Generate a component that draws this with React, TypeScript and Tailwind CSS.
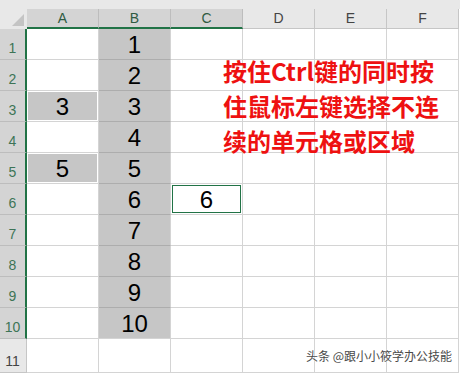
import React from "react";

const cols = ["A", "B", "C", "D", "E", "F"];
const selectedCols = ["A", "B", "C"];
const rows = [1, 2, 3, 4, 5, 6, 7, 8, 9, 10, 11];

function CellValue({ children }: { children: React.ReactNode }) {
  return (
    <span className="text-[24px] leading-[24px] text-black pt-[2px]">
      {children}
    </span>
  );
}

function Cell({ row, col }: { row: number; col: string }) {
  const base =
    "w-[72px] h-full shrink-0 border-r border-b border-[#d4d4d4] flex items-center justify-center";

  if (col === "B" && row <= 10) {
    return (
      <div
        className={`${base} bg-[#c6c6c6] border-b-[#adadad] ${
          row === 10 ? "border-b-[#d4d4d4]" : ""
        }`}
      >
        <CellValue>{row}</CellValue>
      </div>
    );
  }

  if (col === "A" && (row === 3 || row === 5)) {
    return (
      <div className={`${base} p-[1px]`}>
        <div className="w-full h-full bg-[#c6c6c6] flex items-center justify-center">
          <CellValue>{row}</CellValue>
        </div>
      </div>
    );
  }

  if (col === "C" && row === 6) {
    return (
      <div className={`${base} px-[1px] pt-[1px] pb-[1px]`}>
        <div className="w-full h-full border border-[#217346] flex items-center justify-center">
          <CellValue>6</CellValue>
        </div>
      </div>
    );
  }

  return <div className={base} />;
}

export default function App() {
  return (
    <div className="relative w-[460px] h-[373px] bg-white overflow-hidden font-['Liberation_Sans','Noto_Sans_CJK_SC',sans-serif]">
      {/* top strip */}
      <div className="h-[9px] bg-[#e8e8e8]" />

      {/* column headers */}
      <div className="flex h-[20px]">
        <div className="w-[27px] shrink-0 bg-[#e8e8e8] border-b-2 border-[#e8e8e8] relative">
          <svg
            className="absolute right-[3px] bottom-[1px]"
            width="12"
            height="12"
            viewBox="0 0 12 12"
          >
            <polygon points="12,0 12,12 0,12" fill="#c4c4c4" />
          </svg>
        </div>
        {cols.map((c) => {
          const sel = selectedCols.includes(c);
          return (
            <div
              key={c}
              className={`w-[72px] shrink-0 flex items-center justify-center text-[14px] border-r ${
                sel
                  ? "bg-[#d4d4d4] border-b-2 border-b-[#217346] border-r-[#bdbdbd] text-[#2f5a42]"
                  : "bg-[#e8e8e8] border-b border-b-[#c6c6c6] border-r-[#c6c6c6] text-[#444444]"
              }`}
            >
              {c}
            </div>
          );
        })}
      </div>

      {/* grid rows */}
      {rows.map((r) => {
        const sel = r <= 10;
        return (
          <div key={r} className={`flex ${r === 11 ? "h-[34px]" : "h-[31px]"}`}>
            <div
              className={`w-[27px] shrink-0 flex items-end justify-center pb-[3px] text-[14px] leading-[16px] border-b ${
                sel
                  ? "bg-[#d4d4d4] border-r-2 border-r-[#217346] border-b-[#bdbdbd] text-[#3d7456]"
                  : "bg-[#e8e8e8] border-r border-r-[#c6c6c6] border-b-[#c6c6c6] text-[#444444] pr-[1px]"
              }`}
            >
              {r}
            </div>
            {cols.map((c) => (
              <Cell key={c} row={r} col={c} />
            ))}
          </div>
        );
      })}

      {/* red note */}
      <div className="absolute left-[223px] top-[53px] text-[24px] leading-[35px] font-bold text-[#ee1111] font-['Noto_Sans_CJK_SC',sans-serif] whitespace-nowrap">
        <div>按住Ctrl键的同时按</div>
        <div>住鼠标左键选择不连</div>
        <div>续的单元格或区域</div>
      </div>

      {/* watermark */}
      <div className="absolute left-[306px] top-[347px] text-[12px] leading-[18px] text-[#4a4a4a] font-['Noto_Sans_CJK_SC',sans-serif] whitespace-nowrap [text-shadow:0_0_2px_#ffffff]">
        头条 @跟小小筱学办公技能
      </div>
    </div>
  );
}
